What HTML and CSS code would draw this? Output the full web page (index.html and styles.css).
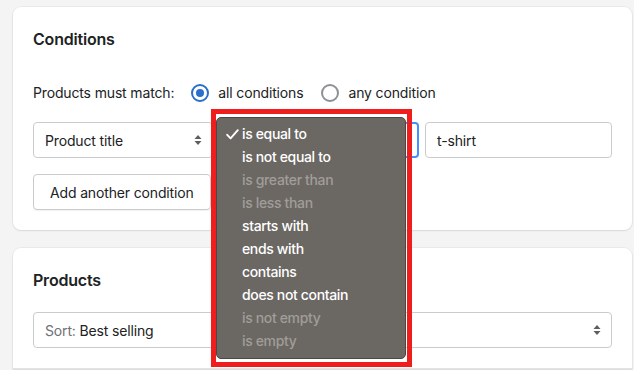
FILE: index.html
```html
<!DOCTYPE html>
<html lang="en">
<head>
  <meta charset="UTF-8" />
  <title>Collection conditions</title>
  <link rel="stylesheet" href="styles.css">
</head>
<body>

  <!-- Conditions -->
  <div class="card">
    <h2>Conditions</h2>
    <div class="match-row">
      <span class="match-label">Products must match:</span>
      <label class="radio"><span class="dot checked"></span>all conditions</label>
      <label class="radio"><span class="dot"></span>any condition</label>
    </div>

    <div class="cond-row">
      <div class="select">
        <span>Product title</span>
        <svg class="arrows" width="8" height="12" viewBox="0 0 8 12"><path d="M4 1 7.5 5H.5z M4 11 .5 7h7z" fill="#5c5f62"/></svg>
      </div>
      <div class="select focused">
        <!-- open native menu covers the select value -->
        <div class="menu">
          <div class="item on"><svg class="tick" width="13" height="11" viewBox="0 0 13 11"><path d="M1.2 5.8 4.6 9.4 11.8 1.2" fill="none" stroke="#fff" stroke-width="1.9" stroke-linecap="round" stroke-linejoin="round"/></svg>is equal to</div>
          <div class="item">is not equal to</div>
          <div class="item off">is greater than</div>
          <div class="item off">is less than</div>
          <div class="item">starts with</div>
          <div class="item">ends with</div>
          <div class="item">contains</div>
          <div class="item">does not contain</div>
          <div class="item off">is not empty</div>
          <div class="item off">is empty</div>
        </div>
        <div class="highlight"></div>
      </div>
      <div class="input">t-shirt</div>
    </div>

    <button class="btn">Add another condition</button>
  </div>

  <!-- Products -->
  <div class="card products">
    <h2>Products</h2>
    <div class="select wide">
      <span><span class="muted">Sort:</span> Best selling</span>
      <svg class="arrows" width="8" height="12" viewBox="0 0 8 12"><path d="M4 1 7.5 5H.5z M4 11 .5 7h7z" fill="#5c5f62"/></svg>
    </div>
  </div>

</body>
</html>
```

FILE: styles.css
```css
* { box-sizing: border-box; }
body {
  margin: 0;
  padding: 7px 2px 0 13px;
  background: #f4f4f4;
  font-family: Inter, "Noto Sans", sans-serif;
  font-size: 14px;
  letter-spacing: -0.15px;
  color: #202223;
  overflow: hidden;
  height: 370px;
}

.card {
  background: white;
  border-radius: 8px;
  padding: 20px;
  box-shadow: 0 0 0 1px rgba(0,0,0,0.04), 0 1px 2px rgba(0,0,0,0.08);
}
.card h2 {
  margin: 0;
  font-size: 16px;
  line-height: 24px;
  font-weight: 600;
  letter-spacing: -0.2px;
}

.match-row {
  display: flex;
  align-items: center;
  margin-top: 30px;
  line-height: 24px;
}
.match-label { margin-right: 17px; }
.radio {
  display: flex;
  align-items: center;
  margin-right: 18px;
}
.dot {
  width: 18px;
  height: 18px;
  border: 2px solid #8c9196;
  border-radius: 50%;
  margin-right: 9px;
  position: relative;
}
.dot.checked { border-color: #2c6ecb; }
.dot.checked::after {
  content: "";
  position: absolute;
  left: 3px;
  top: 3px;
  width: 8px;
  height: 8px;
  border-radius: 50%;
  background: #2c6ecb;
}

.cond-row {
  display: grid;
  grid-template-columns: 180px 200px 1fr;
  gap: 6px;
  margin-top: 17px;
}
.select, .input {
  height: 36px;
  border: 1px solid #c9cccf;
  border-radius: 4px;
  display: flex;
  align-items: center;
  justify-content: space-between;
  padding: 0 10px 0 11px;
  position: relative;
}
.select.focused { border: 2px solid #458fff; }
.arrows { flex: none; }
.muted { color: #6d7175; }

.menu {
  position: absolute;
  left: -5px;
  top: -7px;
  width: 190px;
  height: 242px;
  background: #6b6763;
  border: 1px solid #4a4744;
  border-radius: 5px;
  padding-top: 4px;
  z-index: 2;
  font-weight: 500;
  letter-spacing: -0.35px;
  color: #ffffff;
}
.item {
  height: 23px;
  line-height: 23px;
  padding-left: 25px;
  position: relative;
}
.item.off { color: #a19d99; }
.tick {
  position: absolute;
  left: 9px;
  top: 7px;
}
.highlight {
  position: absolute;
  left: -10px;
  top: -15px;
  width: 201px;
  height: 258px;
  border: 5px solid #f01d1d;
  z-index: 3;
}

.btn {
  margin-top: 16px;
  height: 36px;
  padding: 0 16px;
  background: white;
  border: 1px solid #c9cccf;
  border-radius: 4px;
  font: inherit;
  letter-spacing: inherit;
  color: #202223;
  box-shadow: 0 1px 0 rgba(0,0,0,0.05);
}

.products {
  margin-top: 18px;
  border-radius: 8px 8px 0 0;
  border-bottom: 1px solid #e1e3e5;
}
.select.wide { margin-top: 20px; }
```
